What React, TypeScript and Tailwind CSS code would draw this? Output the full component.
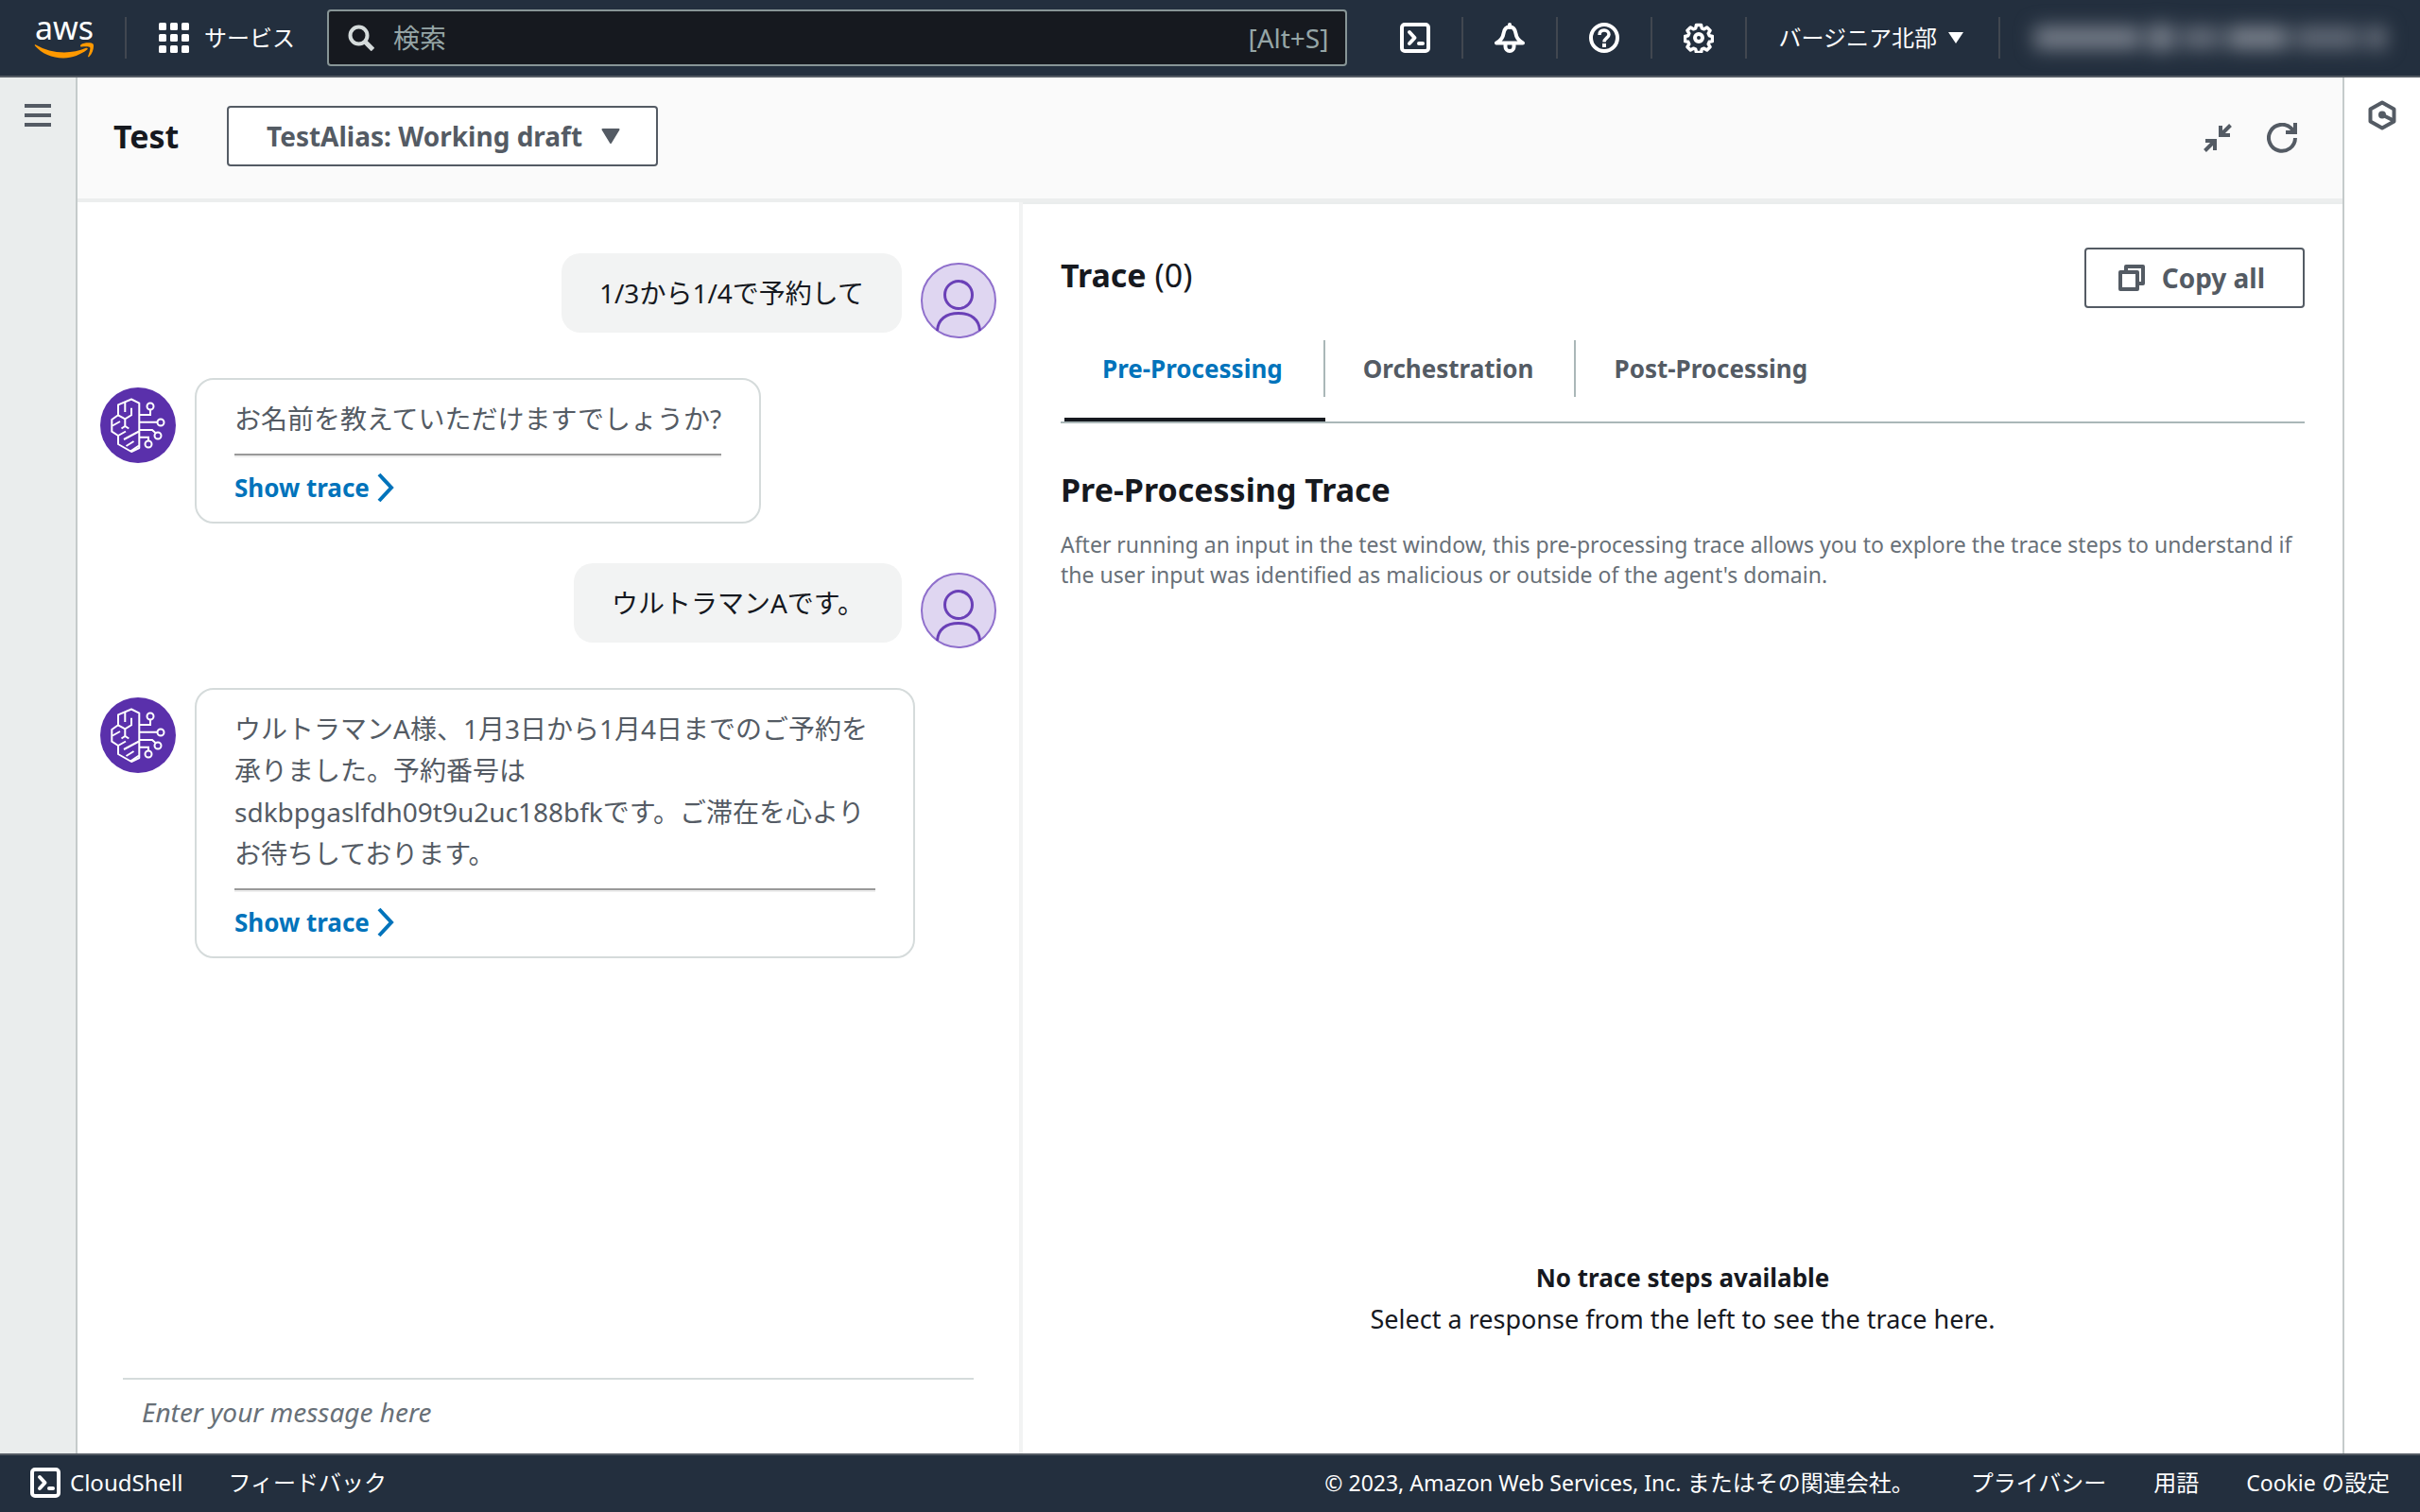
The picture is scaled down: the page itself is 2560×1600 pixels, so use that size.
import { type FormEvent, useState } from 'react';

type Message = {
  id: number;
  from: 'user' | 'agent';
  text: string;
};

const messages: Message[] = [
  { id: 1, from: 'user', text: '1/3から1/4で予約して' },
  { id: 2, from: 'agent', text: 'お名前を教えていただけますでしょうか?' },
  { id: 3, from: 'user', text: 'ウルトラマンAです。' },
  {
    id: 4,
    from: 'agent',
    text: 'ウルトラマンA様、1月3日から1月4日までのご予約を承りました。予約番号はsdkbpgaslfdh09t9u2uc188bfkです。ご滞在を心よりお待ちしております。',
  },
];

const tabs = ['Pre-Processing', 'Orchestration', 'Post-Processing'];

function AwsLogo() {
  return (
    <a href="#home" aria-label="AWS" className="flex w-16 flex-col items-center text-white">
      <span className="text-[34px] leading-6">aws</span>
      <svg viewBox="0 0 64 18" className="mt-1 h-[18px] w-16" aria-hidden>
        <path d="M1 3.5C.3 2.8 1 1.8 2 2.4c9 5.2 19 8 30 8 8 0 16-1.700 23-4.600 1.500-.6 2.500.8 1.200 1.800C49.500 12.800 40.500 16.500 31 16.500 19 16.500 8 11.500 1 3.500z" fill="#ff9900" />
        <path d="M49.500 2.200c4-2.800 11.500-2.400 13-.8 1.300 1.700.2 9.800-4.200 13.600-.8.6-1.500.2-1.100-.7 1.200-3 2.800-8 1.900-9.200-1-1.300-5.900-.9-9-.5-1.100.1-1.500-.8-.6-2.400z" fill="#ff9900" />
      </svg>
    </a>
  );
}

function ShellIcon() {
  return (
    <svg viewBox="0 0 32 32" className="h-8 w-8 shrink-0" fill="none" stroke="currentColor" strokeWidth="4" aria-hidden>
      <rect x="2" y="2" width="28" height="28" rx="3" />
      <path d="M10 10l5.500 6L10 22" strokeLinecap="round" strokeLinejoin="round" />
      <path d="M20 22h4" strokeLinecap="round" />
    </svg>
  );
}

function BellIcon() {
  return (
    <svg viewBox="0 0 32 32" className="h-8 w-8" fill="none" stroke="currentColor" strokeWidth="4" strokeLinejoin="round" aria-hidden>
      <path d="M16 2v3" strokeLinecap="round" />
      <path d="M16 4.500c-4.500 0-6 3.500-6.500 7-.6 4.500-3 7.500-7.500 10h28c-4.500-2.500-6.900-5.500-7.500-10-.5-3.500-2-7-6.500-7z" />
      <path d="M11.500 22v3.500a4.500 4.500 0 0 0 9 0V22" />
    </svg>
  );
}

function HelpIcon() {
  return (
    <svg viewBox="0 0 32 32" className="h-8 w-8" fill="none" stroke="currentColor" strokeWidth="4" aria-hidden>
      <circle cx="16" cy="16" r="14" />
      <path d="M11 13c0-3.500 2.300-5 5-5s5 1.800 5 4.500c0 3.500-5 4-5 8" strokeWidth="3.500" />
      <path d="M16 22v4" />
    </svg>
  );
}

function GearIcon() {
  return (
    <svg viewBox="0 0 32 32" className="h-8 w-8" fill="none" stroke="currentColor" strokeLinejoin="round" aria-hidden>
      <path
        d="M13.500 2.500h5l.8 3.300 2.400 1 3-1.800 3.300 3.300-1.800 3 1 2.400 3.300.8v5l-3.300.8-1 2.400 1.800 3-3.300 3.300-3-1.800-2.400 1-.8 3.300h-5l-.8-3.300-2.400-1-3 1.800L4 25.700l1.800-3-1-2.400-3.300-.8v-5l3.300-.8 1-2.400-1.800-3L7.300 5l3 1.800 2.400-1z"
        strokeWidth="3.500"
      />
      <circle cx="16" cy="16" r="4" strokeWidth="4" />
    </svg>
  );
}

function UserAvatar() {
  return (
    <svg viewBox="0 0 80 80" className="mt-[10px] h-20 w-20 shrink-0" fill="none" role="img" aria-label="User">
      <circle cx="40" cy="40" r="39" fill="#dfd6f1" stroke="#8f6fcc" strokeWidth="2" />
      <circle cx="40" cy="34" r="14.500" stroke="#6a40b7" strokeWidth="3" />
      <path d="M17.500 72C18 60 27 53.500 40 53.500S62 60 62.500 72" stroke="#6a40b7" strokeWidth="3" />
    </svg>
  );
}

function AgentAvatar() {
  return (
    <svg viewBox="0 0 80 80" className="mt-[10px] h-20 w-20 shrink-0" fill="none" role="img" aria-label="Agent">
      <circle cx="40" cy="40" r="40" fill="#5a30ab" />
      <g stroke="#fff" strokeWidth="2">
        <path d="M41.300 16.700V64L33 68l-14-8v-9l-6.700-4.300V34l6.700-4.700v-11l14-5.800z" strokeLinejoin="round" />
        <path d="M19 29.300l7.300 4 6.700-4v-7.600M26.300 16v10M26.300 33.300V42M22.500 43.500l3.800-2.500 4 2.500" />
        <path d="M13 40.500l8-4.500M19 51l8-4.500M25 55l16-8.500M27.500 62l8-5M32 67.500l9-6" />
        <path d="M41 29h12v-5.500M41 36.700h19.500M41 45h14l4 3.500M41 52.700h10v4" />
        <circle cx="53" cy="20" r="3.500" />
        <circle cx="64" cy="37" r="3.500" />
        <circle cx="61" cy="51" r="3.500" />
        <circle cx="51" cy="60" r="3.500" />
      </g>
    </svg>
  );
}

function Caret() {
  return (
    <svg viewBox="0 0 20 16" className="h-4 w-5" aria-hidden>
      <path d="M1.500 1h17L10 15z" fill="currentColor" stroke="currentColor" strokeWidth="2" strokeLinejoin="round" />
    </svg>
  );
}

function Divider() {
  return <div className="h-11 w-[2px] shrink-0 bg-[#414750]" />;
}

function TopNav() {
  return (
    <header className="flex h-[82px] shrink-0 items-center border-b-2 border-[#545b64] bg-[#232f3e] pl-9 text-white">
      <div className="flex shrink-0 items-center gap-8">
        <AwsLogo />
        <Divider />
      </div>
      <nav className="ml-[34px] flex shrink-0 items-center">
        <button type="button" className="flex items-center gap-4 text-2xl">
          <svg viewBox="0 0 32 32" className="h-8 w-8" fill="currentColor" aria-hidden>
            {[0, 12, 24].map((y) =>
              [0, 12, 24].map((x) => <rect key={`${x}-${y}`} x={x} y={y} width="8" height="8" rx="1.500" />),
            )}
          </svg>
          サービス
        </button>
      </nav>
      <label className="ml-[34px] flex h-[60px] min-w-0 flex-1 items-center rounded-[4px] border-2 border-[#879596] bg-[#16191f] pr-[18px] pl-5 text-[28px] text-[#95a5a6]">
        <svg viewBox="0 0 28 28" className="h-7 w-7 shrink-0 text-[#d5dbdb]" fill="none" stroke="currentColor" strokeWidth="4" aria-hidden>
          <circle cx="11.500" cy="11.500" r="9" />
          <path d="M18 18l8.500 8.500" strokeWidth="5" />
        </svg>
        <input
          type="search"
          aria-label="検索"
          placeholder="検索"
          className="ml-5 min-w-0 flex-1 bg-transparent outline-none placeholder:text-[#95a5a6]"
        />
        <span className="text-[28px]">[Alt+S]</span>
      </label>
      <div className="ml-14 flex shrink-0 items-center gap-[33px]">
        <button type="button" aria-label="CloudShell">
          <ShellIcon />
        </button>
        <Divider />
        <button type="button" aria-label="Notifications">
          <BellIcon />
        </button>
        <Divider />
        <button type="button" aria-label="Help">
          <HelpIcon />
        </button>
        <Divider />
        <button type="button" aria-label="Settings">
          <GearIcon />
        </button>
        <Divider />
        <button type="button" className="mr-1 flex items-center gap-3 text-2xl">
          バージニア北部
          <svg viewBox="0 0 16 12" className="h-3 w-4" aria-hidden>
            <path d="M0 0h16L8 12z" fill="currentColor" />
          </svg>
        </button>
        <Divider />
      </div>
      {/* account name is masked */}
      <button type="button" aria-label="Account" className="mr-9 ml-9 flex shrink-0 items-center gap-2 blur-[10px]">
        <span className="h-6 w-[112px] bg-[#777e8a]" />
        <span className="h-7 w-7 bg-[#777e8a]" />
        <span className="h-6 w-10 bg-[#646c79]" />
        <span className="h-6 w-16 bg-[#7b828d]" />
        <span className="h-6 w-[68px] bg-[#616976]" />
        <span className="h-6 w-5 bg-[#6b727e]" />
      </button>
    </header>
  );
}

function TestBar() {
  return (
    <div className="flex h-[132px] shrink-0 items-center border-t-2 border-b-4 border-t-[#f2f3f3] border-b-[#eceeee] bg-[#fafafa] pr-12 pb-[6px] pl-[38px]">
      <h1 className="w-[120px] text-[34px] font-bold text-[#16191f]">Test</h1>
      <div className="grid h-16 items-center text-[#545b64]">
        <select
          aria-label="Alias"
          className="col-start-1 row-start-1 h-16 w-[456px] appearance-none rounded-[4px] border-2 border-[#545b64] bg-white pl-10 text-[28px] font-bold outline-none"
        >
          <option>TestAlias: Working draft</option>
        </select>
        <span className="pointer-events-none col-start-1 row-start-1 mr-10 justify-self-end">
          <Caret />
        </span>
      </div>
      <div className="mt-1 ml-auto flex items-center gap-9 text-[#545b64]">
        <button type="button" aria-label="Collapse">
          <svg viewBox="0 0 32 32" className="h-8 w-8" fill="none" stroke="currentColor" strokeWidth="4" aria-hidden>
            <path d="M29.500 2.500L20 12M19 3v10h10M2.500 29.500L12 20M3 19h10v10" />
          </svg>
        </button>
        <button type="button" aria-label="Refresh">
          <svg viewBox="0 0 32 32" className="h-8 w-8" fill="none" stroke="currentColor" strokeWidth="4" aria-hidden>
            <path d="M30 16a14 14 0 1 1-4-10l3 3.500" />
            <path d="M30 0v10H20" />
          </svg>
        </button>
      </div>
    </div>
  );
}

function UserMessage({ text }: { text: string }) {
  return (
    <li className="flex items-start justify-end gap-5">
      <p className="rounded-[20px] bg-[#f2f3f3] px-10 py-5 text-[28px] leading-[44px] text-[#16191f]">{text}</p>
      <UserAvatar />
    </li>
  );
}

function AgentMessage({ text }: { text: string }) {
  return (
    <li className="flex items-start gap-5">
      <AgentAvatar />
      <div className="max-w-[762px] rounded-[20px] border-2 border-[#d5dbdb] px-10 pt-[19px] pb-3">
        <p className="text-[28px] leading-[44px] text-[#545b64]">{text}</p>
        <hr className="mt-[15px] mb-2 h-1 border-t-2 border-b-2 border-t-[#999999] border-b-[#eeeeee]" />
        <button type="button" className="flex items-center gap-2 text-[26px] leading-[48px] font-bold text-[#0073bb]">
          Show trace
          <svg viewBox="0 0 18 32" className="h-8 w-[18px]" fill="none" stroke="currentColor" strokeWidth="4" aria-hidden>
            <path d="M2 2l13 14L2 30" />
          </svg>
        </button>
      </div>
    </li>
  );
}

function ChatPane() {
  const [draft, setDraft] = useState('');

  const handleSubmit = (e: FormEvent) => {
    e.preventDefault();
    setDraft('');
  };

  return (
    <section aria-label="Chat" className="flex flex-col border-r-4 border-[#f2f3f3] pt-[54px]">
      <ul className="flex flex-1 flex-col gap-[42px] px-6">
        {messages.map((m) =>
          m.from === 'user' ? (
            <UserMessage key={m.id} text={m.text} />
          ) : (
            <AgentMessage key={m.id} text={m.text} />
          ),
        )}
      </ul>
      <form onSubmit={handleSubmit} className="mx-12 h-20 border-t-2 border-[#d5dbdb] px-5">
        <input
          value={draft}
          onChange={(e) => setDraft(e.target.value)}
          aria-label="Message"
          placeholder="Enter your message here"
          className="h-[68px] w-full text-[28px] outline-none placeholder:text-[#687078] placeholder:italic"
        />
      </form>
    </section>
  );
}

function TracePane() {
  const [active, setActive] = useState(tabs[0]);

  return (
    <section
      aria-label="Trace"
      className="flex flex-col border-t-2 border-[#eaeded] px-10 pt-[46px] text-[#16191f]"
    >
      <div className="flex items-start justify-between">
        <h2 className="text-[34px] leading-[58px] font-bold">
          Trace <span className="font-normal">(0)</span>
        </h2>
        <button
          type="button"
          className="flex h-16 items-center gap-[18px] rounded-[4px] border-2 border-[#545b64] pr-10 pl-[34px] text-[28px] font-bold text-[#545b64]"
        >
          <svg viewBox="0 0 28 28" className="h-7 w-7" fill="none" stroke="currentColor" strokeWidth="4" aria-hidden>
            <path d="M2 8h18v18H2z" strokeLinejoin="round" />
            <path d="M8 6V2h18v18h-4" strokeLinejoin="round" />
          </svg>
          Copy all
        </button>
      </div>

      <div role="tablist" className="mt-[34px] flex border-b-2 border-[#aab7b8] pl-1">
        {tabs.map((tab, i) => (
          <button
            key={tab}
            type="button"
            role="tab"
            aria-selected={tab === active}
            onClick={() => setActive(tab)}
            className={`border-b-4 text-[26px] font-bold ${
              tab === active ? 'border-[#16191f] text-[#0073bb]' : 'border-transparent text-[#545b64]'
            }`}
          >
            <span
              className={`mb-[22px] block pr-[43px] pl-10 leading-[60px] ${
                i < tabs.length - 1 ? 'border-r-2 border-[#aab7b8]' : ''
              }`}
            >
              {tab}
            </span>
          </button>
        ))}
      </div>

      <h3 className="mt-[46px] text-[34px] leading-[48px] font-bold">Pre-Processing Trace</h3>
      <p className="mt-[18px] text-[23px] leading-8 text-[#687078]">
        After running an input in the test window, this pre-processing trace allows you to explore the trace steps to
        understand if the user input was identified as malicious or outside of the agent's domain.
      </p>

      <div className="mt-auto pb-[120px] text-center leading-[44px]">
        <p className="text-[26px] font-bold">No trace steps available</p>
        <p className="text-[27px]">Select a response from the left to see the trace here.</p>
      </div>
    </section>
  );
}

function Footer() {
  return (
    <footer className="flex h-[62px] shrink-0 items-center border-t-2 border-[#545b64] bg-[#232f3e] px-8 pb-[2px] text-2xl text-white">
      <button type="button" className="flex items-center gap-[10px]">
        <ShellIcon />
        CloudShell
      </button>
      <a href="#feedback" className="ml-12">
        フィードバック
      </a>
      <p className="ml-auto">
        <span className="text-[23px]">© 2023, Amazon Web Services, Inc.</span> またはその関連会社。
      </p>
      <nav className="ml-[60px] flex gap-[50px]">
        <a href="#privacy">プライバシー</a>
        <a href="#terms">用語</a>
        <a href="#cookies">
          <span className="text-[23px]">Cookie</span> の設定
        </a>
      </nav>
    </footer>
  );
}

const App = () => {
  return (
    <div className="flex min-h-screen flex-col bg-white font-['Noto_Sans','Noto_Sans_CJK_JP',sans-serif]">
      <TopNav />
      <div className="flex flex-1">
        <aside className="flex w-[82px] shrink-0 items-start justify-center border-r-2 border-[#c5cbcb] bg-[#eaeded] pt-7">
          <button type="button" aria-label="Menu" className="flex w-7 flex-col gap-[6px]">
            <span className="h-1 bg-[#545b64]" />
            <span className="h-1 bg-[#545b64]" />
            <span className="h-1 bg-[#545b64]" />
          </button>
        </aside>
        <main className="flex min-w-0 flex-1 flex-col">
          <TestBar />
          <div className="grid flex-1 grid-cols-[1000fr_1396fr]">
            <ChatPane />
            <TracePane />
          </div>
        </main>
        <aside className="flex w-[82px] shrink-0 items-start justify-center border-l-2 border-[#c5cbcb] pt-6">
          <button type="button" aria-label="Tools" className="text-[#545b64]">
            <svg viewBox="0 0 32 32" className="h-8 w-8" fill="none" stroke="currentColor" strokeWidth="4" strokeLinejoin="round" aria-hidden>
              <path d="M16 2.500l12.500 7v13L16 29.500l-12.500-7v-13z" />
              <circle cx="16" cy="15.500" r="4" fill="currentColor" stroke="none" />
              <path d="M16 15.500l12 6" />
            </svg>
          </button>
        </aside>
      </div>
      <Footer />
    </div>
  );
};

export default App;
